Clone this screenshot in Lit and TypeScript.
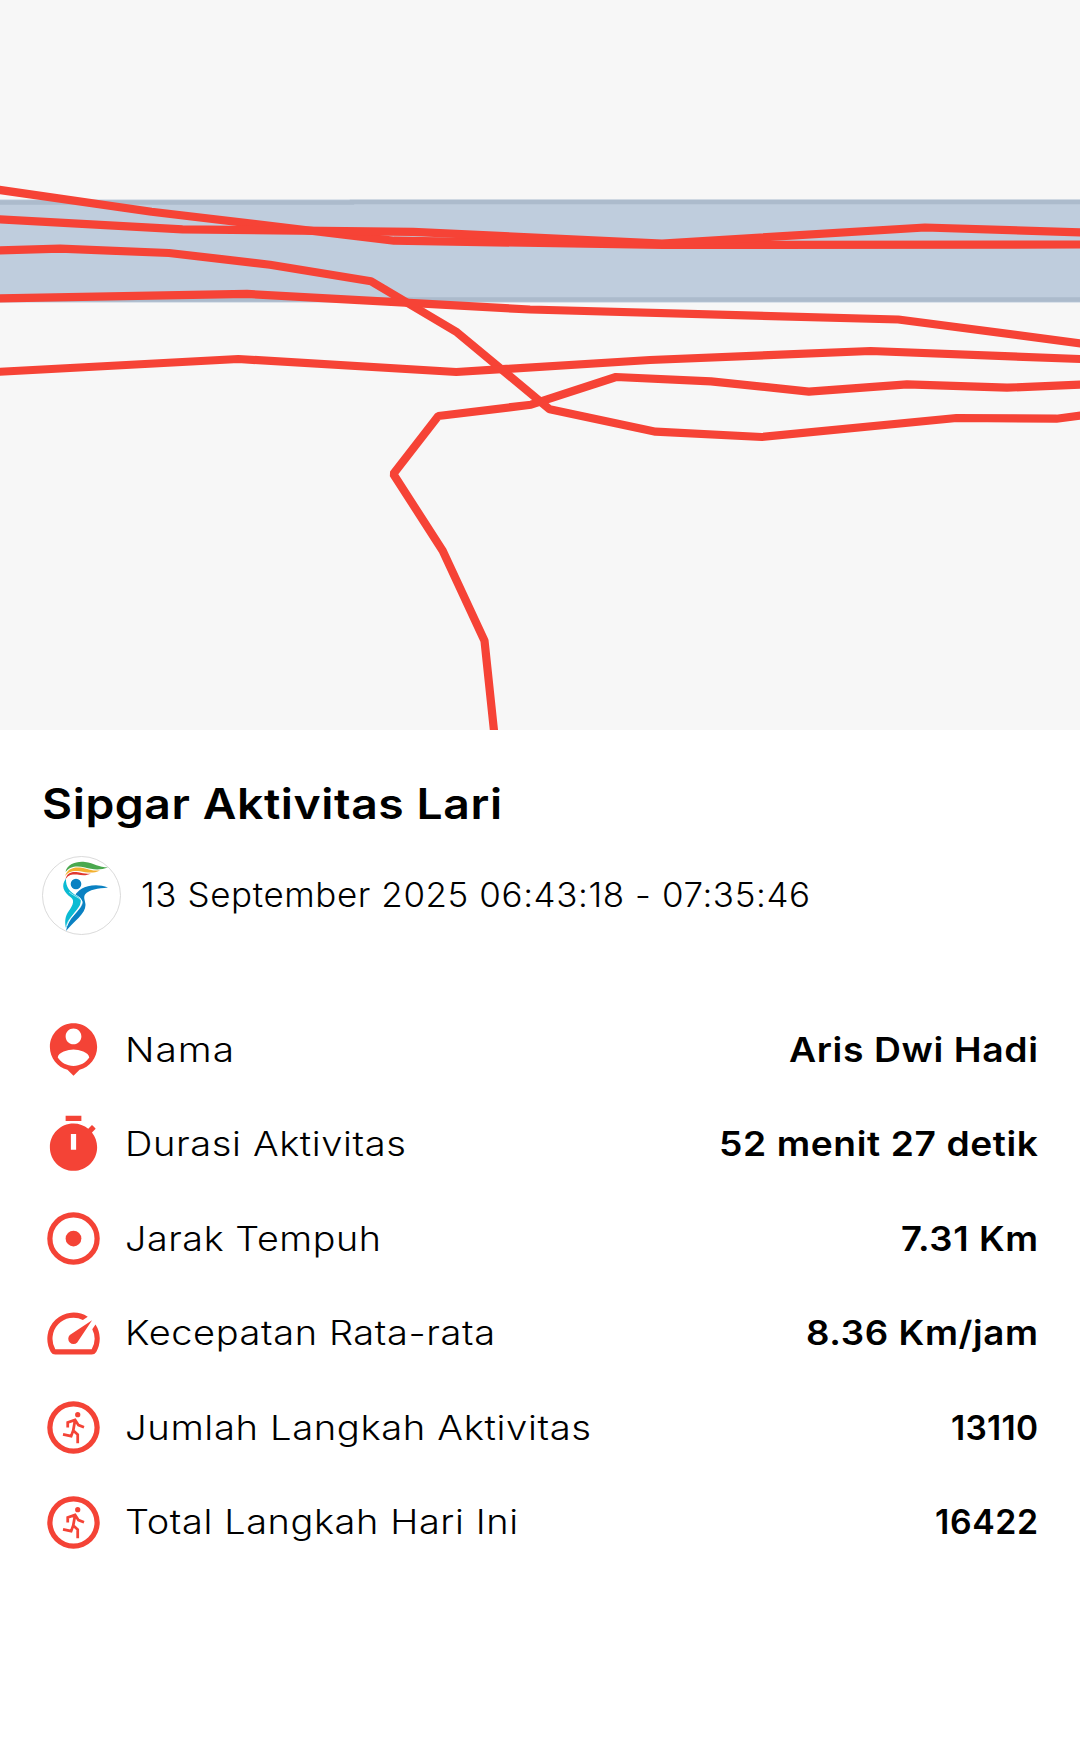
import { LitElement, html, css, svg } from "lit";
import { customElement, property } from "lit/decorators.js";

const ROUTES = [
  "-5,189.3 151.5,211.7 394,240.7 663,245 1085,244.5",
  "-5,219 182.5,229.3 413,231.8 662,243.5 925,227.5 1085,232.5",
  "-5,250.5 60,248.7 169,253 270,264.7 371,281.3 457,332.3 549.7,409.3 655.6,431.7 761.8,437 956.5,418 1056.5,418.7 1085,415",
  "-5,298.4 247,293.9 530,309.5 898.3,319.5 1085,344",
  "-5,372 238.3,359 456.3,372 650,360 870.6,351 1085,359.2",
  "495.5,745 484.5,640.7 442.7,550.7 393.3,474 438.3,416 531,404.7 616,377 711,381.3 808.9,391.7 907,384.3 1007,387.7 1085,384.5",
];

const runner = svg`
  <path fill-rule="evenodd" d="M12 2a10 10 0 1 0 0 20 10 10 0 0 0 0-20zm0 18a8 8 0 1 1 0-16 8 8 0 0 1 0 16z"/>
  <circle cx="13.6" cy="7.1" r="1"/>
  <path d="M9.8 12V10.100L12.600 9.100L13.900 11.100L16 11.900M12.600 9.100L11.900 13.100L13.600 14.700V18M12 12.800L11.100 15.300L8 14.600" fill="none" stroke="currentColor" stroke-width="1.05"/>`;

const ICONS: Record<string, unknown> = {
  person: svg`<path d="M12 2c-4.97 0-9 4.03-9 9 0 4.17 2.84 7.67 6.69 8.69L12 22l2.31-2.31C18.16 18.67 21 15.17 21 11c0-4.97-4.03-9-9-9zm0 2c1.66 0 3 1.34 3 3s-1.34 3-3 3-3-1.34-3-3 1.34-3 3-3zm0 14.3c-2.5 0-4.71-1.28-6-3.22.03-1.99 4-3.08 6-3.08 1.99 0 5.97 1.09 6 3.08-1.29 1.94-3.5 3.22-6 3.22z"/>`,
  timer: svg`<path fill-rule="evenodd" d="M15 1H9v2h6V1zm-4 13h2V8h-2v6zm8.03-6.61l1.42-1.42c-.43-.51-.9-.99-1.41-1.41l-1.42 1.42C16.07 4.74 14.12 4 12 4c-4.97 0-9 4.03-9 9s4.02 9 9 9 9-4.03 9-9c0-2.12-.74-4.07-1.97-5.61z"/>`,
  target: svg`<circle cx="12" cy="12" r="9" fill="none" stroke="currentColor" stroke-width="2"/><circle cx="12" cy="12" r="3"/>`,
  speed: svg`<path d="M20.38 8.57l-1.23 1.85a8 8 0 0 1-.22 7.58H5.07A8 8 0 0 1 15.58 6.85l1.85-1.23A10 10 0 0 0 3.35 19a2 2 0 0 0 1.72 1h13.85a2 2 0 0 0 1.74-1 10 10 0 0 0-.27-10.44z"/><path d="M10.59 15.41a2 2 0 0 0 2.83 0l5.66-8.49-8.49 5.66a2 2 0 0 0 0 2.83z"/>`,
  runner,
};

interface Stat {
  icon: string;
  label: string;
  labelWidth: number;
  value: string;
  valueWidth: number;
}

const STATS: Stat[] = [
  { icon: "person", label: "Nama", labelWidth: 109, value: "Aris Dwi Hadi", valueWidth: 249 },
  { icon: "timer", label: "Durasi Aktivitas", labelWidth: 281, value: "52 menit 27 detik", valueWidth: 319 },
  { icon: "target", label: "Jarak Tempuh", labelWidth: 256, value: "7.31 Km", valueWidth: 137 },
  { icon: "speed", label: "Kecepatan Rata-rata", labelWidth: 370, value: "8.36 Km/jam", valueWidth: 232 },
  { icon: "runner", label: "Jumlah Langkah Aktivitas", labelWidth: 466, value: "13110", valueWidth: 87 },
  { icon: "runner", label: "Total Langkah Hari Ini", labelWidth: 393, value: "16422", valueWidth: 103 },
];

const TRACKING = 0.6;
const MAX_STRETCH = 1.16;

/** A single line of text, widened and tracked out to a given width. */
@customElement("tracked-text")
export class TrackedText extends LitElement {
  @property() text = "";
  @property({ type: Number }) width = 0;

  static styles = css`
    :host { display: block; white-space: nowrap; }
    .line { display: inline-block; transform-origin: left center; }
  `;

  firstUpdated() {
    const line = this.renderRoot.querySelector(".line") as HTMLElement;
    const natural = line.getBoundingClientRect().width;
    const gaps = this.text.length - 1;
    const stretch = Math.min(MAX_STRETCH, Math.max(1, (this.width - gaps * TRACKING) / natural));
    line.style.letterSpacing = `${(this.width / stretch - natural) / gaps}px`;
    line.style.transform = `scaleX(${stretch})`;
    this.style.width = `${this.width}px`;
  }

  render() {
    return html`<span class="line">${this.text}</span>`;
  }
}

@customElement("app-root")
export class AppRoot extends LitElement {
  static styles = css`
    :host {
      display: block;
      height: 1759px;
      overflow: hidden;
      background: #fff;
      color: #000;
      font-family: Inter, "Open Sans", sans-serif;
    }
    .map { display: block; width: 1080px; height: 730px; background: #f7f7f7; }
    .details { display: flex; flex-direction: column; padding: 42px; }
    .title { margin: 0; font-size: 42px; font-weight: 600; line-height: 64px; }
    .when { display: flex; align-items: center; gap: 20px; margin-top: 19px; height: 80px; font-size: 33.5px; font-weight: 300; }
    .logo { width: 79px; height: 79px; flex: none; }
    .stats { display: flex; flex-direction: column; gap: 31.5px; margin: 83px 0 0; }
    .stat { display: flex; align-items: center; height: 63px; font-size: 33.5px; line-height: 40px; }
    .icon { width: 63px; height: 63px; flex: none; color: #f44336; fill: currentColor; margin-right: 20px; }
    .label { font-weight: 300; }
    .value { font-weight: 600; margin-left: auto; }
  `;

  private renderMap() {
    return html`<svg class="map" viewBox="0 0 1080 730">
      <rect x="0" y="199.5" width="1080" height="103" fill="#bfcddd"/>
      <path d="M0 202.500H352V202H1080M0 299.500H1080" fill="none" stroke="#acbbcc" stroke-width="4.5"/>
      ${ROUTES.map((points) => svg`<polyline points=${points} fill="none" stroke="#f64336" stroke-width="8.2" stroke-linejoin="bevel"/>`)}
    </svg>`;
  }

  private renderLogo() {
    return html`<svg class="logo" viewBox="0 0 79 79">
      <circle cx="39.5" cy="39.5" r="39" fill="#fff" stroke="#d0d0d0" stroke-width=".8"/>
      <path d="M23.500 16C25 8.500 34 5 43 6C52 7 57 11.500 66 11.500C58 14.500 50 13.500 43 11.500C35 9.500 28 10 23.500 16Z" fill="#4aa84e"/>
      <path d="M23 20.500C25 12.500 32 10.500 40 11.700C47 13.500 51 15 58 14.500C51 17.800 45 16.500 38 15.300C31 14.500 26 15.500 23 20.500Z" fill="#f3b02f"/>
      <path d="M23.500 23.500C24.500 17 30 15 36 16.300C41 17.500 44 18 49 17.500C44 20 40 19.300 35 18.500C29 18 26 19 23.500 23.500Z" fill="#e0382f"/>
      <circle cx="34" cy="28" r="5.300" fill="#0a81c2"/>
      <path d="M24 22.500C18.500 30 21.500 36 29 41.500C34 45 29 52 25.500 57C22.500 62 23 68 24 72C26 62 35 55 38 49C39 45 40 43.500 35 40C28 36 23.500 31 24 22.500Z" fill="#0bbbd3"/>
      <path d="M66 31.500C56 27.500 45 29.500 40 32.500C36 35 34.500 37 33.500 38.500C38 41 41.500 44 40 48C37 56 26 62 24 75C32 65 43.500 58 43.500 49C43.500 45 41 42 43 38.500C47 33.500 56 32.500 66 31.500Z" fill="#0a81c2"/>
      <path d="M27 36C33 41 42 43 40 48C37 56 26 61 24.500 70" fill="none" stroke="#fff" stroke-width=".6"/>
    </svg>`;
  }

  render() {
    return html`
      ${this.renderMap()}
      <section class="details">
        <h1 class="title"><tracked-text text="Sipgar Aktivitas Lari" width="460"></tracked-text></h1>
        <div class="when">
          ${this.renderLogo()}
          <tracked-text text="13 September 2025 06:43:18 - 07:35:46" width="669"></tracked-text>
        </div>
        <div class="stats">
          ${STATS.map((s) => html`
            <div class="stat">
              <svg class="icon" viewBox="0 0 24 24">${ICONS[s.icon]}</svg>
              <tracked-text class="label" text=${s.label} width=${s.labelWidth}></tracked-text>
              <tracked-text class="value" text=${s.value} width=${s.valueWidth}></tracked-text>
            </div>`)}
        </div>
      </section>
    `;
  }
}
